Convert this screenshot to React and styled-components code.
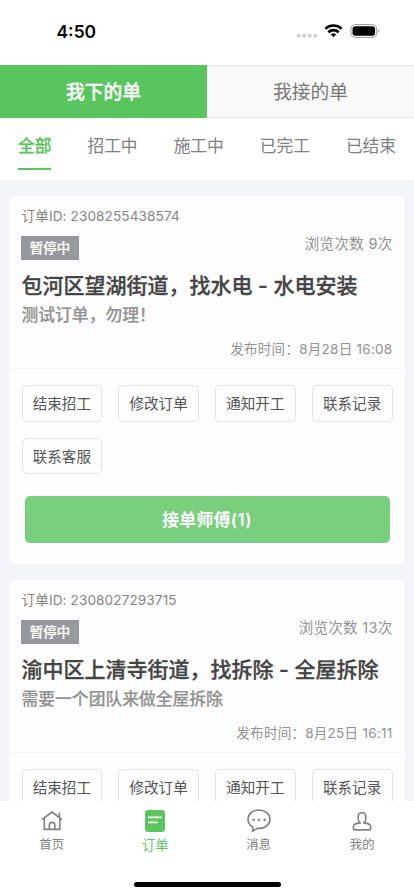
import React from 'react';
import styled, { createGlobalStyle } from 'styled-components';

const GlobalStyle = createGlobalStyle`
  * { box-sizing: border-box; }
  body {
    margin: 0;
    background: #fff;
    font-family: Inter, "Noto Sans CJK SC", sans-serif;
  }
  button { font-family: inherit; margin: 0; padding: 0; cursor: pointer; }
`;

const Screen = styled.div`
  width: 414px;
  height: 896px;
  display: flex;
  flex-direction: column;
  overflow: hidden;
  background: #fff;
  white-space: nowrap;
`;

const StatusBar = styled.header`
  height: 65px;
  flex: none;
  display: flex;
  justify-content: space-between;
  padding: 20px 34px 0 56.500px;
`;

const Clock = styled.time`
  font-size: 17.4px;
  line-height: 23px;
  font-weight: 600;
  color: #000;
`;

const StatusIcons = styled.svg`
  width: 84px;
  height: 24px;
`;

const Switcher = styled.nav`
  flex: none;
  height: 53px;
  display: grid;
  grid-template-columns: 1fr 1fr;
`;

const SwitchTab = styled.button`
  height: 53px;
  border: solid #e6e6e6;
  border-width: ${p => (p.$active ? '0' : '1px 0')};
  background: ${p => (p.$active ? '#5ac55f' : '#f9f9f9')};
  color: ${p => (p.$active ? '#fff' : '#777')};
  font-size: 18.8px;
  line-height: 49px;
  padding-top: 2px;
  -webkit-text-stroke: ${p => (p.$active ? '0.3px' : '0')};
  font-weight: ${p => (p.$active ? 500 : 400)};
`;

const Filters = styled.nav`
  flex: none;
  height: 62px;
  display: flex;
  justify-content: space-between;
  align-items: flex-start;
  padding: 0 18px;
`;

const Filter = styled.button`
  height: 52px;
  border: 0;
  border-bottom: 2px solid ${p => (p.$active ? '#5ac55f' : 'transparent')};
  background: none;
  color: ${p => (p.$active ? '#5ac55f' : '#808080')};
  font-size: 16.7px;
  line-height: 24px;
  padding: 6px 0 0;
  -webkit-text-stroke: ${p => (p.$active ? '0.3px' : '0')};
  font-weight: ${p => (p.$active ? 500 : 400)};
`;

const OrderList = styled.main`
  flex: 1;
  min-height: 0;
  overflow: hidden;
  background: #f3f4f9;
  padding: 16px 9px 0;
  display: flex;
  flex-direction: column;
  gap: 16px;
`;

const Card = styled.article`
  flex: none;
  height: 367.5px;
  background: #fdfdfd;
  border-radius: 5px;
`;

const Summary = styled.section`
  height: 173px;
  padding: 10px 12.5px 0;
  border-bottom: 1px solid #f5f5f5;
`;

const OrderId = styled.div`
  height: 30px;
  font-size: 13.6px;
  line-height: 20px;
  letter-spacing: 0.1px;
  color: #858585;
`;

const MetaRow = styled.div`
  height: 35px;
  display: flex;
  justify-content: space-between;
  align-items: flex-start;
`;

const Badge = styled.span`
  width: 58px;
  height: 24px;
  margin-left: -0.5px;
  border-radius: 1px;
  background: #98999d;
  color: #fff;
  font-size: 13.5px;
  line-height: 24px;
  font-weight: 500;
  -webkit-text-stroke: 0.2px;
  text-align: center;
`;

const Views = styled.span`
  font-size: 14.5px;
  line-height: 15px;
  letter-spacing: 0.3px;
  color: #929292;
`;

const Title = styled.h2`
  margin: 0;
  font-size: 21px;
  line-height: 30px;
  font-weight: 500;
  -webkit-text-stroke: 0.3px;
  color: #444;
`;

const Description = styled.p`
  margin: 0;
  font-size: 16.8px;
  line-height: 28px;
  font-weight: 500;
  -webkit-text-stroke: 0.2px;
  color: #929292;
`;

const PostedAt = styled.div`
  margin-top: 11px;
  text-align: right;
  font-size: 13.5px;
  line-height: 18px;
  letter-spacing: 0.27px;
  color: #929292;
`;

const Actions = styled.div`
  display: grid;
  grid-template-columns: repeat(4, 1fr);
  gap: 16px;
  padding: 16px 12.5px 0;
`;

const ActionButton = styled.button`
  height: 36.5px;
  border: 1px solid #e3e3e3;
  border-radius: 5px;
  background: #fdfdfd;
  color: #555;
  font-size: 14.6px;
  line-height: 34px;
  padding-top: 1px;
`;

const WorkersButton = styled.button`
  display: block;
  width: 365px;
  height: 47px;
  margin: 21.5px 0 0 15.5px;
  border: 0;
  border-radius: 5px;
  background: #79cf7e;
  color: #fff;
  font-size: 16.8px;
  line-height: 45px;
  letter-spacing: 0.4px;
  padding-top: 2px;
  font-weight: 600;
`;

const TabBar = styled.footer`
  flex: none;
  height: 95px;
  display: flex;
  flex-direction: column;
  align-items: center;
  justify-content: space-between;
  padding-bottom: 9px;
  background: #fff;
`;

const TabItems = styled.nav`
  width: 100%;
  display: grid;
  grid-template-columns: repeat(4, 1fr);
`;

const TabItem = styled.button`
  border: 0;
  background: none;
  display: flex;
  flex-direction: column;
  align-items: center;
  padding-top: 7px;
  color: ${p => (p.$active ? '#5ac55f' : '#808080')};
  font-size: ${p => (p.$active ? '13.2px' : '12.4px')};
  line-height: 20px;
  gap: 1px;
`;

const TabIcon = styled.svg`
  width: 26px;
  height: 26px;
  fill: none;
  stroke: currentColor;
  stroke-width: 1.6;
  stroke-linecap: round;
  stroke-linejoin: round;
`;

const HomeIndicator = styled.div`
  width: 147px;
  height: 5px;
  border-radius: 3px;
  background: #000;
`;

const ORDERS = [
  {
    id: '2308255438574',
    views: 9,
    title: '包河区望湖街道，找水电 - 水电安装',
    description: '测试订单，勿理！',
    posted: '8月28日 16:08',
  },
  {
    id: '2308027293715',
    views: 13,
    title: '渝中区上清寺街道，找拆除 - 全屋拆除',
    description: '需要一个团队来做全屋拆除',
    posted: '8月25日 16:11',
  },
];

const FILTERS = ['全部', '招工中', '施工中', '已完工', '已结束'];
const ACTIONS = ['结束招工', '修改订单', '通知开工', '联系记录', '联系客服'];

const TABS = [
  {
    label: '首页',
    icon: (
      <>
        <path d="M3.7 11.2 13 4l9.3 7.2M20.4 9.4V5.2" />
        <path d="M5.3 10.2v11.2h15.6V10.2M10.3 21.2v-4a2.8 2.8 0 0 1 5.6 0v4" />
      </>
    ),
  },
  {
    label: '订单',
    icon: (
      <>
        <rect x="3" y="2" width="20" height="22" rx="3.2" fill="currentColor" stroke="none" />
        <path d="M6.8 9.4h12.2M6.8 14.4h8" stroke="#fff" strokeWidth="1.8" />
      </>
    ),
  },
  {
    label: '消息',
    icon: (
      <>
        <path d="M13 2C6.6 2 2 6.1 2 11.3c0 3.4 1.9 6.2 5 7.8l-.4 4.2 4.6-3c.6.1 1.2.1 1.8.1 6.4 0 11-3.9 11-9.1S19.4 2 13 2Z" />
        <g fill="currentColor" stroke="none">
          <circle cx="7.6" cy="11.7" r="1.3" />
          <circle cx="13" cy="11.7" r="1.3" />
          <circle cx="18.6" cy="11.7" r="1.3" />
        </g>
      </>
    ),
  },
  {
    label: '我的',
    icon: (
      <>
        <path d="M11 14.9c-1.200-1-1.800-2.400-1.800-4.200V8.400c0-2.300 1.500-3.700 3.800-3.700s3.800 1.400 3.800 3.700v2.300c0 1.800-.6 3.200-1.800 4.200" />
        <path d="M11 14.900c-3.300.3-6.600 1.100-6.600 3.600v1.700c0 1.100.7 1.700 1.700 1.700h13.800c1 0 1.700-.6 1.700-1.700v-1.700c0-2.500-3.300-3.300-6.600-3.600" />
      </>
    ),
  },
];

function StatusGlyphs() {
  return (
    <StatusIcons viewBox="0 0 84 24">
      <g fill="#cfcfcf">
        <circle cx="2.8" cy="15.7" r="2" />
        <circle cx="8.3" cy="15.7" r="2" />
        <circle cx="13.8" cy="15.7" r="2" />
        <circle cx="19.3" cy="15.7" r="2" />
      </g>
      <g fill="none" stroke="#000" strokeWidth="2.6">
        <path d="M29.4 8.7a12 12 0 0 1 16.2 0" />
        <path d="M32.3 12.2a7.6 7.6 0 0 1 10.4 0" />
      </g>
      <path d="m37.5 17.3-2.6-2.8a3.8 3.8 0 0 1 5.2 0Z" fill="#000" />
      <rect x="54.9" y="4.6" width="25.8" height="12.8" rx="4.2" fill="none" stroke="#999" />
      <rect x="56.5" y="6.2" width="22.6" height="9.6" rx="2.8" fill="#000" />
      <path d="M82.1 8.9v4c1.5-.6 1.5-3.4 0-4Z" fill="#999" />
    </StatusIcons>
  );
}

function OrderCard({ order }) {
  return (
    <Card>
      <Summary>
        <OrderId>订单ID: {order.id}</OrderId>
        <MetaRow>
          <Badge>暂停中</Badge>
          <Views>浏览次数 {order.views}次</Views>
        </MetaRow>
        <Title>{order.title}</Title>
        <Description>{order.description}</Description>
        <PostedAt>发布时间：{order.posted}</PostedAt>
      </Summary>
      <Actions>
        {ACTIONS.map(label => (
          <ActionButton key={label}>{label}</ActionButton>
        ))}
      </Actions>
      <WorkersButton>接单师傅(1)</WorkersButton>
    </Card>
  );
}

export default function App() {
  return (
    <Screen>
      <GlobalStyle />
      <StatusBar>
        <Clock>4:50</Clock>
        <StatusGlyphs />
      </StatusBar>
      <Switcher>
        <SwitchTab $active>我下的单</SwitchTab>
        <SwitchTab>我接的单</SwitchTab>
      </Switcher>
      <Filters>
        {FILTERS.map((label, i) => (
          <Filter key={label} $active={i === 0}>{label}</Filter>
        ))}
      </Filters>
      <OrderList>
        {ORDERS.map(order => (
          <OrderCard key={order.id} order={order} />
        ))}
      </OrderList>
      <TabBar>
        <TabItems>
          {TABS.map((tab, i) => (
            <TabItem key={tab.label} $active={i === 1}>
              <TabIcon viewBox="0 0 26 26">{tab.icon}</TabIcon>
              {tab.label}
            </TabItem>
          ))}
        </TabItems>
        <HomeIndicator />
      </TabBar>
    </Screen>
  );
}
